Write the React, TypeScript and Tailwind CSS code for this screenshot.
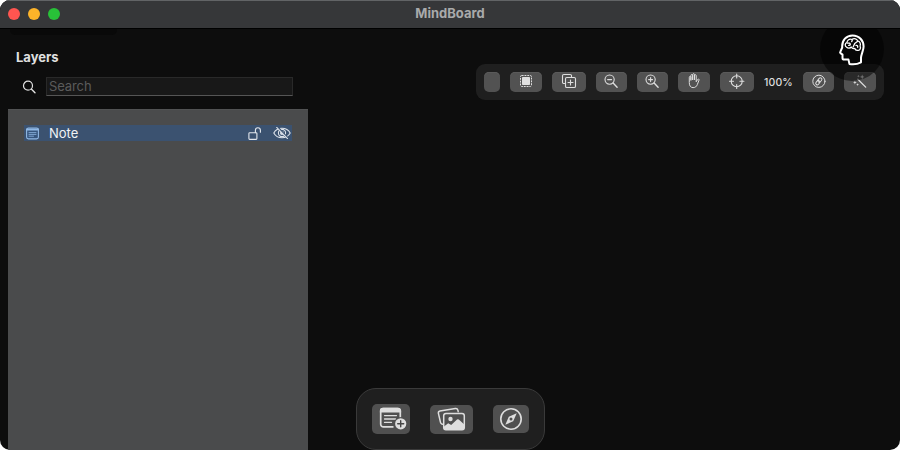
import type { ReactNode } from "react";

function Icon({ w, h, sw = 1, className = "", children }: { w: number; h: number; sw?: number; className?: string; children: ReactNode }) {
  return (
    <svg
      width={w}
      height={h}
      viewBox={`0 0 ${w} ${h}`}
      fill="none"
      stroke="currentColor"
      strokeWidth={sw}
      strokeLinecap="round"
      strokeLinejoin="round"
      className={`shrink-0 ${className}`}
    >
      {children}
    </svg>
  );
}

const SelectionIcon = () => (
  <Icon w={14} h={14}>
    <rect x="1.5" y="1.5" width="11" height="11" rx="1.2" strokeDasharray="1.9 0.9" strokeLinecap="butt" />
    <rect x="3" y="3" width="8" height="8" rx="0.8" fill="currentColor" stroke="none" />
  </Icon>
);

const DuplicateIcon = () => (
  <Icon w={16} h={16} sw={1.1}>
    <path d="M4.2 10.5H2.8a1.3 1.3 0 0 1-1.3-1.3V2.8a1.3 1.3 0 0 1 1.3-1.3H9.2a1.3 1.3 0 0 1 1.3 1.3v1.4" />
    <rect x="4.5" y="4.5" width="10" height="10" rx="1.3" />
    <path d="M9.5 7v5M7 9.5h5" />
  </Icon>
);

const ZoomIcon = ({ plus = false }: { plus?: boolean }) => (
  <Icon w={14} h={14} sw={1.1} className="mr-0.5">
    <circle cx="5.6" cy="5.6" r="4.6" />
    <path d="M9.1 9.1l4 4.1" strokeWidth="1.4" />
    <path d="M3.6 5.6h4" />
    {plus && <path d="M5.6 3.6v4" />}
  </Icon>
);

const HandIcon = () => (
  <Icon w={14} h={16} sw={1}>
    <path d="M2.3 9V4.2c0-1.1 1.6-1.1 1.6 0V7.4V2.4c0-1.2 1.8-1.2 1.8 0V7V1.6c0-1.2 1.8-1.2 1.8 0V7V2.6c0-1.2 1.7-1.2 1.7 0v6.2l1.4-2.3c.6-.9 1.8-.4 1.4.7l-1.7 4.4c-.8 2-2 3-4.2 3C3.6 14.6 2.3 12.8 2.3 10z" />
  </Icon>
);

const TargetIcon = () => (
  <Icon w={16} h={16} sw={1.1}>
    <circle cx="7.7" cy="8.3" r="5.5" />
    <path d="M7.7 1v4M7.7 11.6v4M.5 8.3h4M10.900 8.3h4" />
  </Icon>
);

const LinkIcon = () => (
  <Icon w={14} h={14} sw={1}>
    <circle cx="6.9" cy="7.3" r="6.1" />
    <g transform="rotate(-52 6.9 7.3)">
      <rect x="2.8" y="5.7" width="4.7" height="3.1" rx="1.55" />
      <rect x="6.2" y="5.7" width="4.7" height="3.1" rx="1.55" />
    </g>
  </Icon>
);

const WandIcon = () => (
  <Icon w={14} h={14} sw={1.3}>
    <path d="M4.8 5.2l7.9 7.9" />
    <path
      d="M9.2.5l.7 1.7 1.7.7-1.7.7-.7 1.7-.7-1.7-1.700-.7 1.700-.7zM5.400.8l.4 1 1 .4-1 .4-.4 1-.4-1-1-.4 1-.4zM1.900 6.600l.5 1.400 1.400.5-1.400.5-.5 1.400-.5-1.400L0 8.500 1.400 8zM4.600 9.300l.4 1 1 .4-1 .4-.4 1-.4-1-1-.4 1-.4z"
      fill="currentColor"
      stroke="none"
    />
  </Icon>
);

const NoteIcon = () => (
  <Icon w={13} h={13} className="text-[#91b9e6]">
    <rect x=".6" y="1" width="11.8" height="10.9" rx="1.8" fill="#37567e" strokeWidth="1.1" />
    <path d="M1 2.400h11" strokeWidth="2" />
    <path d="M3 5.600h7M3 7.400h7M3 9.200h4.500" strokeWidth=".8" />
  </Icon>
);

const UnlockIcon = () => (
  <Icon w={14} h={14} sw={1.1} className="text-[#e3e7ed]">
    <rect x=".9" y="6.8" width="8" height="6.6" rx=".8" />
    <path d="M7.400 6.600V4.200a2.500 2.500 0 0 1 5 0v2" />
  </Icon>
);

const HiddenIcon = () => (
  <Icon w={18} h={12} sw={1.1} className="text-[#dce2ea]">
    <path d="M.8 6C4.200-.4 13.800-.4 17.200 6C13.800 12.400 4.200 12.400 .8 6z" />
    <circle cx="9" cy="6" r="3.6" />
    <circle cx="9" cy="6" r="2" fill="currentColor" stroke="none" />
    <path d="M4.800.3l10.400 11.400" stroke="#3b5270" strokeWidth="1.8" />
    <path d="M3.700.4l10.800 11.200" />
  </Icon>
);

const AddNoteIcon = () => (
  <Icon w={28} h={24} sw={1.7} className="ml-1">
    <path d="M14.500 19.900H4.400a2.700 2.700 0 0 1-2.700-2.700V4.100a2.600 2.600 0 0 1 2.600-2.600h14.400a2.600 2.600 0 0 1 2.600 2.600v6.500" strokeLinecap="butt" />
    <path d="M.9 5.600V3.500Q.9.7 4 .7h15q3.100 0 3.100 2.800v2.100z" fill="currentColor" stroke="none" />
    <path d="M5.500 8.600h12M5.500 12h11M5.500 15.400h7" strokeWidth="1.3" />
    <circle cx="21.700" cy="16.800" r="6.5" fill="#505050" stroke="none" />
    <circle cx="21.700" cy="16.800" r="5.6" fill="currentColor" stroke="none" />
    <path d="M21.700 13.800v6M18.700 16.800h6" stroke="#454545" strokeWidth="1.4" />
  </Icon>
);

const PhotosIcon = () => (
  <Icon w={29} h={26} sw={1.5}>
    <path d="M5.800 18.200L4.800 18Q3.800 17.600 3.500 16.400L1.400 7.300Q1.100 5.400 2.900 5L18.400 2.600Q20.300 2.300 20.900 4.200L21.200 5.700" />
    <rect x="6.7" y="7.5" width="20.6" height="16.3" rx="2.3" />
    <circle cx="13.5" cy="13" r="2.2" fill="currentColor" stroke="none" />
    <path d="M6.700 20.800l4.500-3.500 3 1.800 5.800-5.600q.9-.7 1.800 0l5.500 5v3q0 2.300-2.300 2.300H9Q6.700 23.800 6.700 20.800z" fill="currentColor" stroke="none" />
  </Icon>
);

const CompassIcon = () => (
  <Icon w={24} h={24} sw={1.6}>
    <circle cx="12" cy="12" r="10.2" />
    <path d="M17.700 6.200l-3.500 8-7.900 3.600 3.500-8z" fill="currentColor" stroke="none" />
    <circle cx="12" cy="12" r="1.5" fill="#505050" stroke="none" />
  </Icon>
);

const BrainIcon = () => (
  <Icon w={28} h={32} sw={2}>
    <path d="M10.500 25.600H6.200q-1.700 0-1.700-1.700v-3.300l-2-1.500q-.6-.5-.2-1.200L4.200 13.500C3.700 6 8.500 1.400 14.500 1.400C21.300 1.400 25.600 6.500 25.600 12.500c0 4.200-2.600 7.800-2.600 11.500v4.300q-5.500 2.900-11.600 1.600z" />
    <path d="M8.600 13.200c-2-.8-1.800-3.800.3-4.500.2-2.600 2.600-4.200 5-3.200 2.200-1.700 5.200-.7 5.700 1.300 2.400.5 3.300 3.200 2.500 5.100 1 2.200-.1 4.700-2.100 4.400-1.200.3-2.700-.3-3.200-1.800-1.800.3-3-.4-3.500-1.500-1.200 1.500-3.500 1.200-4.700.2z" strokeWidth="1.300" />
    <path d="M9.600 9.200q2.400-.6 2.700 1.100-.2 1.200-1.700 1m3.700-5.300-.6 1.700m5.700-.3-2.700 2.200-1.600 3.400m2.900-1.600q1.900-.3 1.700 1.900" strokeWidth="1.300" />
  </Icon>
);

const ToolButton = ({ className, children }: { className: string; children?: ReactNode }) => (
  <button className={`flex h-5 shrink-0 items-center justify-center rounded-[5px] bg-[#525252] pb-0.5 text-[#dedede] shadow-[inset_0_1px_0_#5a5a5a] ${className}`}>
    {children}
  </button>
);

export default function App() {
  return (
    <div className="h-[450px] w-[900px] overflow-hidden bg-white font-['Inter','Liberation_Sans',sans-serif]">
      <div className="flex h-full flex-col overflow-hidden rounded-[10px] bg-[#0d0d0d]">
        <header className="relative z-10 flex h-7 shrink-0 items-center border-t border-[#626466] bg-[#363739] px-2 pb-px shadow-[0_1px_0_#000]">
          <div className="flex w-40 gap-2">
            <span className="size-3 rounded-full bg-[#ff5550]" />
            <span className="size-3 rounded-full bg-[#fdb329]" />
            <span className="size-3 rounded-full bg-[#28c138]" />
          </div>
          <h1 className="flex-1 pb-0.5 text-center text-[13px] leading-4 font-bold text-[#a9aaab]">MindBoard</h1>
          <div className="w-40" />
        </header>

        <div className="flex min-h-0 flex-1">
          <aside className="flex w-[308px] shrink-0 flex-col pl-2">
            <div className="ml-0.5 h-[7px] w-[107px] rounded-b-[5px] bg-[#090909]" />
            <h2 className="mt-[13px] ml-2 h-[18px] text-[13px] leading-[18px] font-bold text-[#e0e0e0]">Layers</h2>
            <div className="mt-[11px] flex h-[19px] items-center pl-3.5">
              <Icon w={14} h={14} sw={1.2} className="text-[#e0e0e0]">
                <circle cx="6" cy="5.7" r="4.5" />
                <path d="M9.3 9l3.7 3.8" strokeWidth="1.4" />
              </Icon>
              <input
                placeholder="Search"
                className="ml-2.5 h-[19px] w-[247px] rounded-none border border-[#292929] border-b-[#555] bg-[#181818] px-0.5 pb-px text-[13px] leading-4 tracking-[-0.1px] text-white outline-none placeholder:text-[#5b5b5b]"
              />
            </div>
            <div className="mt-[13px] flex-1 border-t border-[#515253] bg-[#4a4b4c] px-4 pt-[15px]">
              <div className="flex h-4 w-[268px] items-center bg-[#3b5270] pl-0.5 text-[13px] leading-4 text-[#f0f2f5]">
                <NoteIcon />
                <span className="ml-2.5 flex-1">Note</span>
                <UnlockIcon />
                <span className="w-[11px]" />
                <HiddenIcon />
                <span className="w-px" />
              </div>
            </div>
          </aside>

          <main className="relative flex flex-1 flex-col justify-between">
            <div className="mt-9 mr-4 flex h-9 w-[408px] items-center gap-2.5 self-end rounded-[9px] bg-[#1f1f1f] px-2">
              <ToolButton className="w-4" />
              <ToolButton className="w-8"><SelectionIcon /></ToolButton>
              <ToolButton className="w-[34px]"><DuplicateIcon /></ToolButton>
              <ToolButton className="w-[31px]"><ZoomIcon /></ToolButton>
              <ToolButton className="w-[31px]"><ZoomIcon plus /></ToolButton>
              <ToolButton className="w-8"><HandIcon /></ToolButton>
              <ToolButton className="w-[34px]"><TargetIcon /></ToolButton>
              <span className="w-[29px] shrink-0 pt-0.5 text-[10.5px] leading-4 font-medium tracking-[0.15px] text-[#dedede]">100%</span>
              <ToolButton className="w-[31px]"><LinkIcon /></ToolButton>
              <ToolButton className="w-8"><WandIcon /></ToolButton>
            </div>

            <div className="ml-12 flex h-[62px] w-[189px] items-center justify-center gap-5 rounded-[20px] border border-[#3a3a3a] bg-[#1f1f1f]">
              <button className="flex h-[30px] w-[38px] items-center justify-center rounded-[5px] bg-[#505050] text-[#dedede]"><AddNoteIcon /></button>
              <button className="flex h-[29px] w-[43px] items-center justify-center rounded-[5px] bg-[#505050] text-[#dedede]"><PhotosIcon /></button>
              <button className="flex h-7 w-9 items-center justify-center rounded-[5px] bg-[#505050] text-[#dedede]"><CompassIcon /></button>
            </div>

            <div className="absolute -top-[11px] right-4 flex size-16 items-center justify-center rounded-full bg-black/50 pt-0.5 text-white">
              <BrainIcon />
            </div>
          </main>
        </div>
      </div>
    </div>
  );
}
